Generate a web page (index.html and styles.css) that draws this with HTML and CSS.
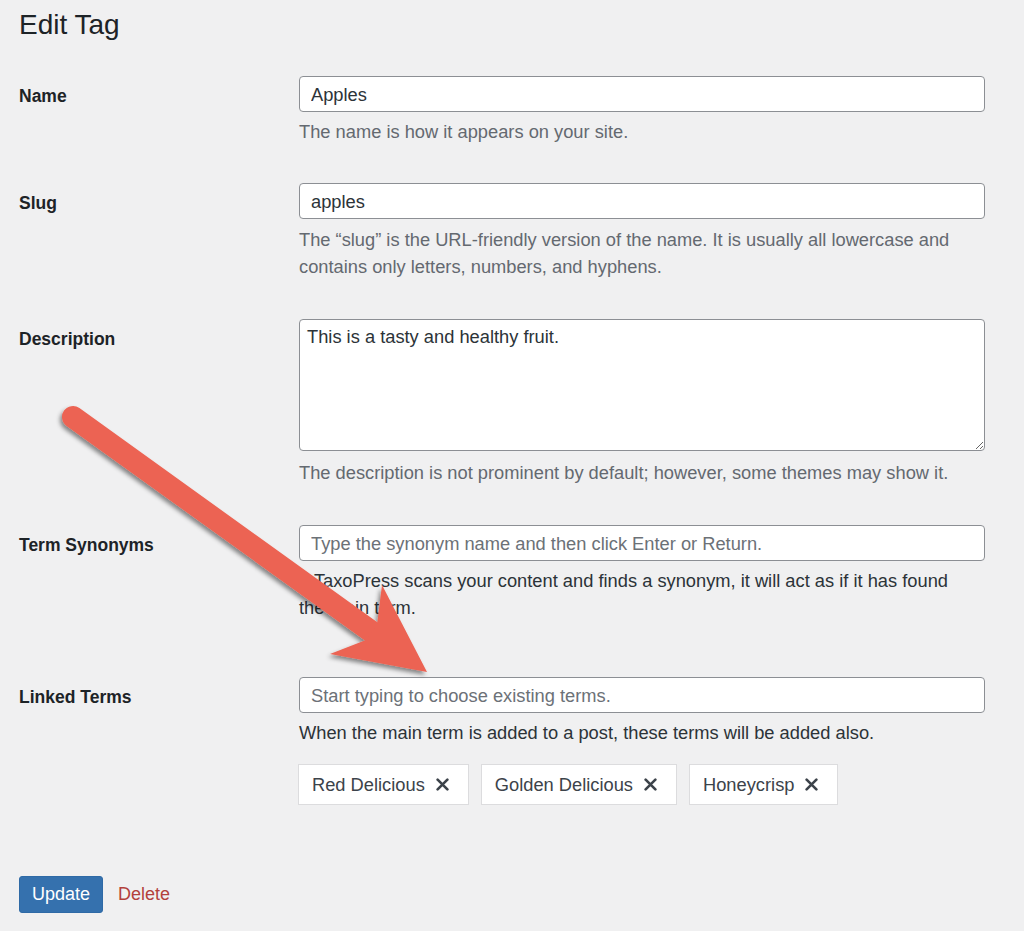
FILE: index.html
```html
<!DOCTYPE html>
<html lang="en">
<head>
<meta charset="utf-8">
<title>Edit Tag</title>
<link rel="stylesheet" href="styles.css">
</head>
<body>
<main class="page">
  <h1 class="title">Edit Tag</h1>
  <form class="form">
    <div class="row row-name">
      <label class="label" for="name">Name</label>
      <div class="field">
        <input class="input" id="name" type="text" value="Apples">
        <p class="desc">The name is how it appears on your site.</p>
      </div>
    </div>
    <div class="row row-slug">
      <label class="label" for="slug">Slug</label>
      <div class="field">
        <input class="input" id="slug" type="text" value="apples">
        <p class="desc desc-slug">The “slug” is the URL-friendly version of the name. It is usually all lowercase and contains only letters, numbers, and hyphens.</p>
      </div>
    </div>
    <div class="row row-description">
      <label class="label" for="description">Description</label>
      <div class="field">
        <textarea class="textarea" id="description">This is a tasty and healthy fruit.</textarea>
        <p class="desc desc-textarea">The description is not prominent by default; however, some themes may show it.</p>
      </div>
    </div>
    <div class="row row-synonyms">
      <label class="label" for="synonyms">Term Synonyms</label>
      <div class="field">
        <input class="input" id="synonyms" type="text" placeholder="Type the synonym name and then click Enter or Return.">
        <p class="desc desc-dark">If TaxoPress scans your content and finds a synonym, it will act as if it has found the main term.</p>
      </div>
    </div>
    <div class="row row-linked">
      <label class="label" for="linked">Linked Terms</label>
      <div class="field">
        <input class="input" id="linked" type="text" placeholder="Start typing to choose existing terms.">
        <p class="desc desc-dark">When the main term is added to a post, these terms will be added also.</p>
        <ul class="tags">
          <li class="tag">Red Delicious <span class="tag-x"><svg viewBox="0 0 12 12" width="13" height="13"><path d="M1.5 1.5L10.5 10.5M10.5 1.5L1.5 10.5" stroke="#3c434a" stroke-width="2.4" stroke-linecap="round"/></svg></span></li>
          <li class="tag">Golden Delicious <span class="tag-x"><svg viewBox="0 0 12 12" width="13" height="13"><path d="M1.5 1.5L10.5 10.5M10.5 1.5L1.5 10.5" stroke="#3c434a" stroke-width="2.4" stroke-linecap="round"/></svg></span></li>
          <li class="tag">Honeycrisp <span class="tag-x"><svg viewBox="0 0 12 12" width="13" height="13"><path d="M1.5 1.5L10.5 10.5M10.5 1.5L1.5 10.5" stroke="#3c434a" stroke-width="2.4" stroke-linecap="round"/></svg></span></li>
        </ul>
      </div>
    </div>
    <div class="actions">
      <button class="btn-primary" type="button">Update</button>
      <a class="delete" href="#">Delete</a>
    </div>
  </form>
  <svg class="arrow" width="1024" height="931" viewBox="0 0 1024 931" aria-hidden="true">
    <defs>
      <filter id="shadow" x="-10%" y="-10%" width="120%" height="120%">
        <feDropShadow dx="-2" dy="3" stdDeviation="2.2" flood-color="#000" flood-opacity="0.45"/>
      </filter>
    </defs>
    <g filter="url(#shadow)" fill="#ec6352">
      <path d="M73 417 L372 632" stroke="#ec6352" stroke-width="22" stroke-linecap="round" fill="none"/>
      <path d="M382 585 L377 625 L366 640 L330 654 L427 672 Z"/>
    </g>
  </svg>
</main>
</body>
</html>
```

FILE: styles.css
```css
* { box-sizing: border-box; }

body {
  margin: 0;
  background: #f0f0f1;
  font-family: "Liberation Sans", Arial, sans-serif;
  color: #1d2327;
}

.page {
  position: relative;
  width: 1024px;
  height: 931px;
  padding: 0 0 0 19px;
  overflow: hidden;
}

.title {
  margin: 7px 0 0;
  font-size: 28px;
  line-height: 36px;
  font-weight: 400;
  color: #1d2327;
}

.form {
  margin-top: 33px;
}

.row {
  display: grid;
  grid-template-columns: 280px 686px;
}

.row-name { margin-bottom: 38px; }
.row-slug { margin-bottom: 39px; }
.row-description { margin-bottom: 39px; }
.row-synonyms { margin-bottom: 56px; }
.row-linked { margin-bottom: 71px; }

.label {
  font-size: 17.5px;
  font-weight: 700;
  line-height: 36px;
  padding-top: 2px;
  color: #1d2327;
}

.field {
  display: flex;
  flex-direction: column;
}

.input,
.textarea {
  width: 686px;
  border: 1px solid #8c8f94;
  border-radius: 4px;
  background: #fff;
  font-family: "Liberation Sans", Arial, sans-serif;
  font-size: 18.3px;
  color: #2c3338;
  margin: 0;
}

.input {
  height: 36px;
  padding: 2px 11px 0;
}

.input::placeholder {
  color: #6c7177;
  opacity: 1;
}

.textarea {
  height: 132px;
  padding: 5px 7px;
  line-height: 24px;
  resize: vertical;
  display: block;
}

.desc {
  margin: 6px 0 0;
  max-width: 665px;
  font-size: 18.3px;
  line-height: 27px;
  color: #646970;
}

.desc-slug { margin-top: 7px; }
.desc-textarea { margin-top: 8px; }
.desc-dark { color: #2c3338; }

.tags {
  list-style: none;
  margin: 18px 0 0 -1px;
  padding: 0;
  display: flex;
  gap: 12px;
}

.tag {
  height: 41px;
  display: flex;
  align-items: center;
  padding: 0 19px 0 13px;
  border: 1px solid #dcdcde;
  background: #fff;
  font-size: 18.3px;
  color: #3c434a;
}

.tag-x {
  display: inline-flex;
  margin-left: 11px;
}

.actions {
  display: flex;
  align-items: center;
  gap: 15px;
}

.btn-primary {
  height: 37px;
  width: 84px;
  padding: 0;
  border: 1px solid #2f6aa6;
  border-radius: 3px;
  background: #3571ae;
  color: #fff;
  font-family: "Liberation Sans", Arial, sans-serif;
  font-size: 18px;
  cursor: pointer;
}

.delete {
  color: #b3403c;
  font-size: 18px;
  text-decoration: none;
}

.arrow {
  position: absolute;
  top: 0;
  left: 0;
  pointer-events: none;
}
```
